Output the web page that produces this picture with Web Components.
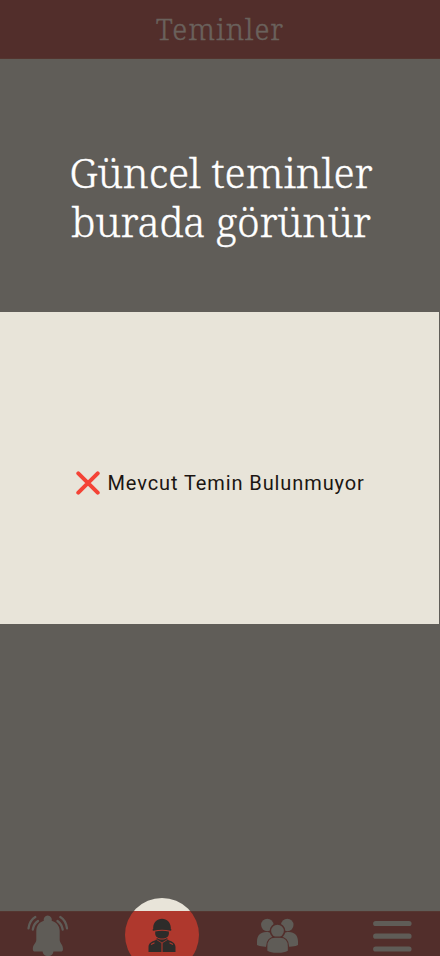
<!DOCTYPE html>
<html lang="tr">
<head>
<meta charset="utf-8">
<title>Teminler</title>
<style>
html,body{margin:0;height:100%;overflow:hidden;background:#605d58}
</style>
</head>
<body>
<temin-screen></temin-screen>
<script>
const define = (name, markup) => {
  const template = document.createElement('template');
  template.innerHTML = markup;
  customElements.define(name, class extends HTMLElement {
    constructor() {
      super();
      this.attachShadow({mode: 'open'}).append(template.content.cloneNode(true));
    }
  });
};

define('app-header', `
<style>
:host{display:flex;justify-content:center;height:59px;box-sizing:border-box;background:#522e2b;border-bottom:1px solid #54352f;
font:300 29px/58px "Noto Serif","DejaVu Serif Condensed","DejaVu Serif",serif;color:#6a615c;letter-spacing:1.050px;-webkit-text-stroke:.4px #6a615c}
</style><span><slot></slot></span>`);

define('tour-title', `
<style>
:host{display:flex;flex-direction:column;align-items:center;justify-content:center;height:253px;box-sizing:border-box;padding:23px 0 0 2px;
font:300 41px/49px "Noto Serif","DejaVu Serif Condensed","DejaVu Serif",serif;color:#fff;text-align:center;white-space:nowrap;-webkit-text-stroke:.35px #fff}
</style><slot></slot>`);

define('empty-notice', `
<style>
:host{display:flex;align-items:center;height:312px;width:439px;box-sizing:border-box;padding:30px 0 0 76px;gap:7.500px;background:#e8e4d9;
font:20px/24px Roboto,sans-serif;color:#1b1512;letter-spacing:.9px;white-space:nowrap}
svg{width:24px;height:24px;flex:none}
</style>
<svg viewBox="0 0 24 24"><path d="M2.3 2.3 21.7 21.7M21.7 2.3 2.3 21.7" stroke="#f44336" stroke-width="4" stroke-linecap="round"/></svg>
<span><slot></slot></span>`);

define('tab-bar', `
<style>
:host{display:grid;grid-template-columns:105px 114px 116px 105px;height:45px;background:#522e2b;box-shadow:inset 0 1px #553630;color:#5f5c57}
svg{display:block;width:100%;height:45px}
</style>
<svg viewBox="0 0 105 45" fill="currentColor">
<path d="M47.700 4.500a4.200 4.200 0 0 1 4 5.300C56.500 11.300 59.700 15 59.700 20v9c0 3 3.300 4.500 3.300 9 0 2-.8 2.500-2.200 2.500H35c-1.400 0-2.200-.5-2.200-2.500 0-4.500 3.500-6 3.500-9v-9c0-5 2.800-8.700 7.500-10.200a4.200 4.200 0 0 1 3.900-5.300Z"/>
<path d="M42.500 39h11c0 4-2 6-5.500 6s-5.500-2-5.500-6Z"/>
<g fill="none" stroke="currentColor" stroke-width="2.300" stroke-linecap="round"><path d="M35.300 6Q29.500 9.500 28.500 17.300M38 10Q33.700 12.800 32.800 18.500M60.300 6Q66 9.500 67 17.300M57.500 10Q61.700 12.800 62.700 18.500"/></g>
</svg>
<span></span>
<svg viewBox="219 0 116 45" fill="currentColor">
<circle cx="267.300" cy="14" r="6.200"/><circle cx="287.300" cy="14" r="6.200"/>
<path d="M257 34v-3.500c0-6 3.500-9.500 9-9.500 2 0 3.800.3 5.200 1.200M298 34v-3.500c0-6-3.500-9.500-9-9.500-2 0-3.800.3-5.200 1.200l-8 13.500c7 1 19 .3 22.200-1.700M257 34c4 2 15 2.700 20 1.700l-5.800-13.500"/>
<circle cx="277.500" cy="20" r="7.100" stroke="#522e2b" stroke-width="1.500"/>
<path d="M266.700 40v-4.500c0-6 3.500-9.300 8.300-9.300h5c5 0 8.500 3.300 8.500 9.300V40c-4 3.300-18 3.300-21.800 0Z" stroke="#522e2b" stroke-width="1.300"/>
</svg>
<svg viewBox="335 0 105 45"><path d="M375.700 12.500H409M375.700 25.200H409M375.700 38H409" stroke="currentColor" stroke-width="5.200" stroke-linecap="round"/></svg>`);

define('tour-spotlight', `
<style>
:host{position:absolute;left:125px;top:898px;width:74px;height:58px;overflow:hidden;display:block}
svg{display:block}
</style>
<svg width="74" height="74" viewBox="125 898 74 74">
<defs><clipPath id="c"><circle cx="162" cy="935" r="37"/></clipPath></defs>
<g clip-path="url(#c)"><path fill="#e8e4d9" d="M125 898h74v13h-74Z"/><path fill="#af382d" d="M125 911h74v61h-74Z"/></g>
<g fill="#2d2c2a">
<path d="M153.200 929v-1.500c.3-5.200 3.700-8.700 8.800-8.700s8.500 3.500 8.800 8.700v1.500c.9.200.8 1.700-.3 1.700-5.500-1.400-11.500-1.400-17 0-1.100 0-1.200-1.500-.3-1.700Z"/>
<path d="M155.200 931.500c4.500-1 9.200-1 13.700 0v2c0 3.500-3.300 5.100-6.900 5.100s-6.800-1.600-6.800-5.100Z"/>
<path d="M157 938c2.500 2 7.500 2 10 0l1.500 2.300c4 1.200 7 3 7 7v4.700h-27v-4.700c0-4 3-5.800 7-7Z"/>
</g>
<path d="m156.300 939.400 5.700 3.600 5.700-3.600" fill="none" stroke="#af382d" stroke-width=".8"/>
<path d="M162 943v9M151 944.500l3.500-1.700M173 944.500l-3.500-1.700" stroke="#af382d" stroke-width="1.100"/>
</svg>`);

define('temin-screen', `
<style>
:host{display:flex;flex-direction:column;position:relative;width:440px;height:956px;overflow:hidden;background:#605d58}
.space{flex:1}
.second{letter-spacing:-.3px}
</style>
<app-header>Teminler</app-header>
<tour-title><div>Güncel teminler</div><div class="second">burada görünür</div></tour-title>
<empty-notice>Mevcut Temin Bulunmuyor</empty-notice>
<div class="space"></div>
<tab-bar></tab-bar>
<tour-spotlight></tour-spotlight>`);
</script>
</body>
</html>
